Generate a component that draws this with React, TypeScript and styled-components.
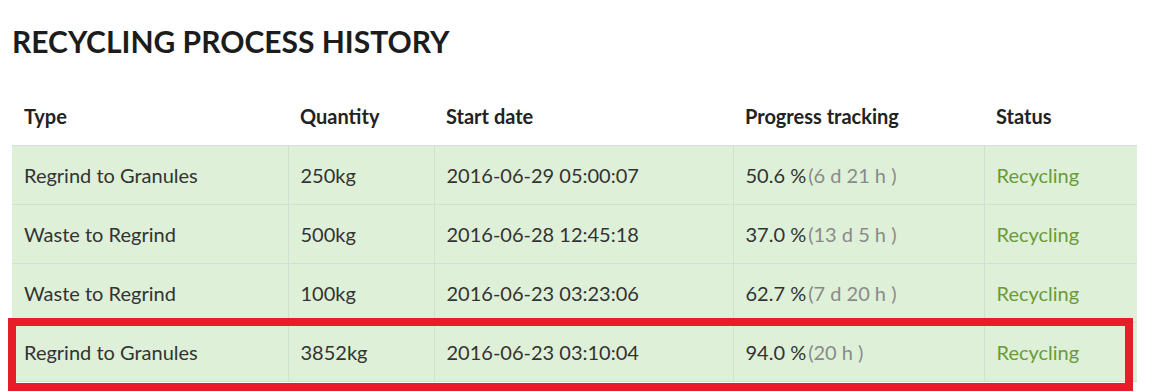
import React from "react";
import styled, { createGlobalStyle } from "styled-components";

const Global = createGlobalStyle`
  html, body { margin: 0; padding: 0; background: #fff; }
  body { font-family: Lato, "Open Sans", sans-serif; color: #333; }
`;

const Page = styled.div`
  box-sizing: border-box;
  min-height: 392px;
  padding: 0 36px 0 12px;
`;

const Title = styled.h2`
  margin: 0;
  padding-top: 23px;
  font-size: 30px;
  line-height: 36px;
  font-weight: 700;
  color: #1c1c1c;
`;

const TableWrap = styled.div`
  position: relative;
  margin-top: 28px;
`;

const Table = styled.table`
  width: 1125px;
  border-collapse: collapse;
  table-layout: fixed;
  font-size: 20px;
`;

const Th = styled.th`
  text-align: left;
  font-weight: 700;
  color: #222;
  padding: 0 12px;
  height: 58px;
  border-bottom: 1px solid #dcdcdc;
  vertical-align: middle;
`;

const Row = styled.tr`
  background: #dff0d8;
`;

const Td = styled.td<{ $tone?: "green" }>`
  padding: 0 12px;
  height: 58px;
  border: 1px solid #d3dfd0;
  color: ${(p) => (p.$tone === "green" ? "#6b9a39" : "#333")};
  vertical-align: middle;
  &:first-child { border-left: none; }
  &:last-child { border-right: none; }
`;

const Muted = styled.span`
  color: #8a8a8a;
  margin-left: 2px;
`;

const Highlight = styled.div`
  position: absolute;
  left: -4px;
  top: 231px;
  width: 1125px;
  height: 73px;
  box-sizing: border-box;
  border: 8px solid #e61e27;
  pointer-events: none;
`;

type Item = {
  type: string;
  qty: string;
  start: string;
  pct: string;
  left: string;
};

const rows: Item[] = [
  { type: "Regrind to Granules", qty: "250kg", start: "2016-06-29 05:00:07", pct: "50.6 %", left: "(6 d 21 h )" },
  { type: "Waste to Regrind", qty: "500kg", start: "2016-06-28 12:45:18", pct: "37.0 %", left: "(13 d 5 h )" },
  { type: "Waste to Regrind", qty: "100kg", start: "2016-06-23 03:23:06", pct: "62.7 %", left: "(7 d 20 h )" },
  { type: "Regrind to Granules", qty: "3852kg", start: "2016-06-23 03:10:04", pct: "94.0 %", left: "(20 h )" },
];

export default function App() {
  return (
    <Page>
      <Global />
      <Title>RECYCLING PROCESS HISTORY</Title>
      <TableWrap>
        <Table>
          <colgroup>
            <col style={{ width: 276 }} />
            <col style={{ width: 146 }} />
            <col style={{ width: 299 }} />
            <col style={{ width: 251 }} />
            <col style={{ width: 153 }} />
          </colgroup>
          <thead>
            <tr>
              <Th>Type</Th>
              <Th>Quantity</Th>
              <Th>Start date</Th>
              <Th>Progress tracking</Th>
              <Th>Status</Th>
            </tr>
          </thead>
          <tbody>
            {rows.map((r, i) => (
              <Row key={i}>
                <Td>{r.type}</Td>
                <Td>{r.qty}</Td>
                <Td>{r.start}</Td>
                <Td>
                  {r.pct}
                  <Muted>{r.left}</Muted>
                </Td>
                <Td $tone="green">Recycling</Td>
              </Row>
            ))}
          </tbody>
        </Table>
        <Highlight />
      </TableWrap>
    </Page>
  );
}
